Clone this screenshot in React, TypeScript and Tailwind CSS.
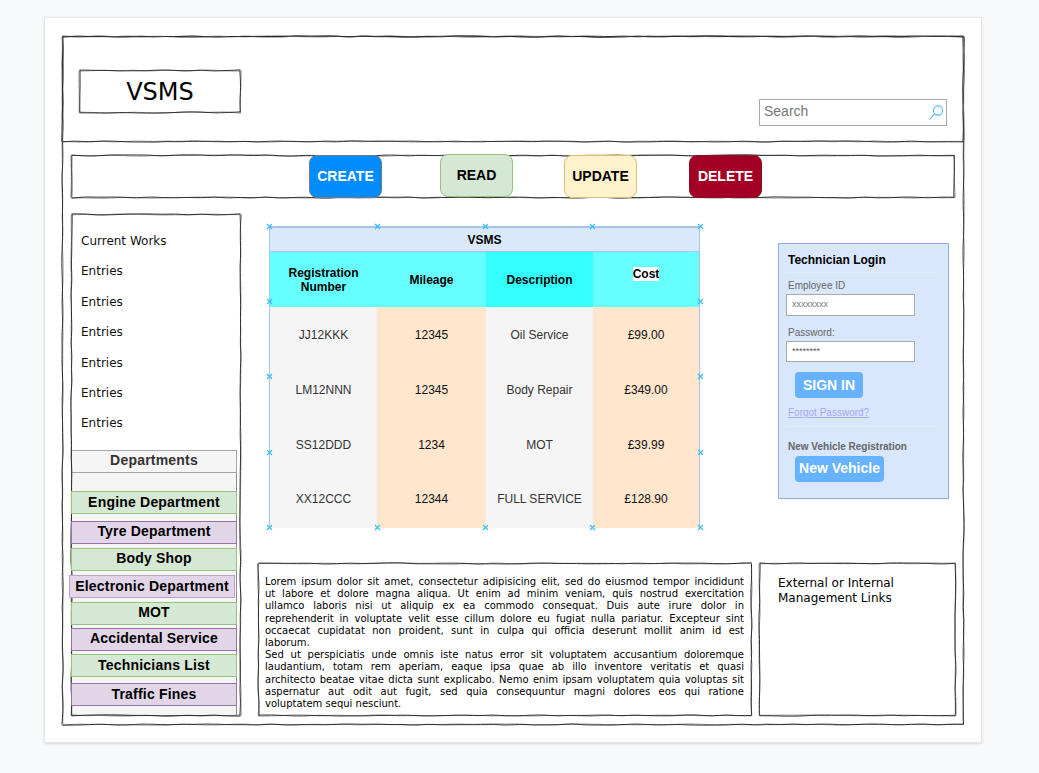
import type { ReactNode } from "react";

// hand drawn look: wobbly outline, drawn twice so it gets the dark + grey double stroke
const makeRand = (seed: number) => {
  let s = seed;
  return () => {
    s = (s * 16807) % 2147483647;
    return (s % 1000) / 1000;
  };
};

const wobbleLine = (x1: number, y1: number, x2: number, y2: number, rand: () => number) => {
  const len = Math.hypot(x2 - x1, y2 - y1);
  const steps = Math.max(2, Math.round(len / 13));
  const horizontal = y1 === y2;
  const pts: number[][] = [];
  for (let i = 0; i <= steps; i++) {
    const t = i / steps;
    const off = (rand() - 0.5) * 1.5;
    pts.push(horizontal ? [x1 + (x2 - x1) * t, y1 + off] : [x1 + off, y1 + (y2 - y1) * t]);
  }
  let d = `M${pts[0][0].toFixed(1)} ${pts[0][1].toFixed(1)}`;
  for (let i = 1; i < pts.length - 1; i++) {
    const mx = (pts[i][0] + pts[i + 1][0]) / 2;
    const my = (pts[i][1] + pts[i + 1][1]) / 2;
    d += ` Q${pts[i][0].toFixed(1)} ${pts[i][1].toFixed(1)} ${mx.toFixed(1)} ${my.toFixed(1)}`;
  }
  const last = pts[pts.length - 1];
  return `${d} L${last[0].toFixed(1)} ${last[1].toFixed(1)}`;
};

const wobbleBox = (w: number, h: number, seed: number) => {
  const rand = makeRand(seed);
  return [
    wobbleLine(0, 0, w, 0, rand),
    wobbleLine(w, 0, w, h, rand),
    wobbleLine(w, h, 0, h, rand),
    wobbleLine(0, h, 0, 0, rand),
  ].join(" ");
};

const SketchOutline = ({ w, h, seed }: { w: number; h: number; seed: number }) => (
  <svg className="absolute left-0 top-0 overflow-visible pointer-events-none" width={w} height={h} fill="none">
    <g transform="translate(0.5 0.5)">
      <path d={wobbleBox(w - 1, h - 1, seed)} stroke="#8f8f8f" strokeWidth="1" />
      <path d={wobbleBox(w - 1, h - 1, seed + 97)} stroke="#111" strokeWidth="0.8" />
    </g>
  </svg>
);

const Handle = ({ className }: { className: string }) => (
  <svg className={`absolute ${className}`} width="7" height="7" viewBox="0 0 7 7" stroke="#35bdf5" strokeWidth="1.1">
    <path d="M1 1L6 6M6 1L1 6" />
  </svg>
);

const crudButtons = [
  { label: "CREATE", className: "bg-[#008cff] border-[#6c7a89] text-white mr-[58px]" },
  { label: "READ", className: "bg-[#d5e8d4] border-[#97c27f] text-black mr-[51px] -mt-[1px]" },
  { label: "UPDATE", className: "bg-[#fff2cc] border-[#dcc06c] text-black mr-[52px]" },
  { label: "DELETE", className: "bg-[#a20025] border-[#8a1020] text-white" },
];

const departments = [
  { label: "Engine Department", className: "mt-[18px] pb-[1px] bg-[#d5e8d4] border-[#97c27f]" },
  { label: "Tyre Department", className: "mt-[7px] pb-[3px] bg-[#e1d5e7] border-[#9673a6]" },
  { label: "Body Shop", className: "mt-[4px] pb-[3px] bg-[#d5e8d4] border-[#97c27f]" },
  { label: "Electronic Department", className: "mt-[4px] -ml-[2px] pb-[1px] bg-[#e1d5e7] border-[#b9a3c4]" },
  { label: "MOT", className: "mt-[4px] pb-[3px] bg-[#d5e8d4] border-[#97c27f]" },
  { label: "Accidental Service", className: "mt-[3px] pb-[3px] bg-[#e1d5e7] border-[#9673a6]" },
  { label: "Technicians List", className: "mt-[3px] pb-[1px] bg-[#d5e8d4] border-[#97c27f]" },
  { label: "Traffic Fines", className: "mt-[6px] pb-[1px] bg-[#e1d5e7] border-[#9673a6]" },
];

const rows = [
  ["JJ12KKK", "12345", "Oil Service", "£99.00"],
  ["LM12NNN", "12345", "Body Repair", "£349.00"],
  ["SS12DDD", "1234", "MOT", "£39.99"],
  ["XX12CCC", "12344", "FULL SERVICE", "£128.90"],
];

const loremLines = [
  "Lorem ipsum dolor sit amet, consectetur adipisicing elit, sed do eiusmod tempor incididunt",
  "ut labore et dolore magna aliqua. Ut enim ad minim veniam, quis nostrud exercitation",
  "ullamco laboris nisi ut aliquip ex ea commodo consequat. Duis aute irure dolor in",
  "reprehenderit in voluptate velit esse cillum dolore eu fugiat nulla pariatur. Excepteur sint",
  "occaecat cupidatat non proident, sunt in culpa qui officia deserunt mollit anim id est",
];

const sedLines = [
  "Sed ut perspiciatis unde omnis iste natus error sit voluptatem accusantium doloremque",
  "laudantium, totam rem aperiam, eaque ipsa quae ab illo inventore veritatis et quasi",
  "architecto beatae vitae dicta sunt explicabo. Nemo enim ipsam voluptatem quia voluptas sit",
  "aspernatur aut odit aut fugit, sed quia consequuntur magni dolores eos qui ratione",
];

const Cell = ({ children, className }: { children: ReactNode; className: string }) => (
  <div className={`flex items-center justify-center text-center ${className}`}>{children}</div>
);

const VehicleTable = () => (
  <div className="relative w-[431px] h-[302px] font-['Liberation_Sans',sans-serif] text-[12px] text-[#333]">
    <div className="h-[26px] flex items-center justify-center bg-[#dae8fc] border-t-2 border-x border-b border-[#a9c4e8] font-bold text-black">
      VSMS
    </div>
    <div className="grid grid-cols-[107px_109px_107px_106px] h-[55px] font-bold text-black leading-[14px] border-x border-[#a9c4e8]">
      <Cell className="bg-[#66ffff]">Registration<br />Number</Cell>
      <Cell className="bg-[#66ffff]">Mileage</Cell>
      <Cell className="bg-[#33ffff]">Description</Cell>
      <Cell className="bg-[#66ffff] pb-[11px]"><span className="bg-white">Cost</span></Cell>
    </div>
    <div className="border-x border-[#a9c4e8] h-[221px] grid grid-rows-[55px_55px_55px_56px]">
      {rows.map((row, i) => {
        const shift = i === 3 ? "pb-[2px]" : "";
        return (
          <div key={row[0]} className="grid grid-cols-[107px_109px_107px_106px]">
            <Cell className={`bg-[#f5f5f5] ${shift}`}>{row[0]}</Cell>
            <Cell className={`bg-[#ffe6cc] text-[#111] ${shift}`}>{row[1]}</Cell>
            <Cell className={`bg-[#f5f5f5] ${shift}`}>{row[2]}</Cell>
            <Cell className={`bg-[#ffe6cc] text-[#111] ${shift}`}>{row[3]}</Cell>
          </div>
        );
      })}
    </div>
    <Handle className="left-[-3px] top-[-3px]" />
    <Handle className="left-[105px] top-[-3px]" />
    <Handle className="left-[213px] top-[-3px]" />
    <Handle className="left-[320px] top-[-3px]" />
    <Handle className="left-[428px] top-[-3px]" />
    <Handle className="left-[-3px] top-[72px]" />
    <Handle className="left-[428px] top-[72px]" />
    <Handle className="left-[-3px] top-[147px]" />
    <Handle className="left-[428px] top-[147px]" />
    <Handle className="left-[-3px] top-[223px]" />
    <Handle className="left-[428px] top-[223px]" />
    <Handle className="left-[-3px] top-[298px]" />
    <Handle className="left-[105px] top-[298px]" />
    <Handle className="left-[213px] top-[298px]" />
    <Handle className="left-[320px] top-[298px]" />
    <Handle className="left-[428px] top-[298px]" />
  </div>
);

const LoginPanel = () => (
  <div className="w-[171px] h-[256px] bg-[#d8e7fb] border border-[#8fb0dc] pl-[7px] pr-[9px] font-['Liberation_Sans',sans-serif]">
    <div className="pl-[2px] pt-[9px] h-[29px] text-[12px] leading-[14px] font-bold text-black border-b border-[#e0ecfc]">
      Technician Login
    </div>
    <div className="pl-[2px] mt-[7px] text-[10px] leading-[12px] text-[#666]">Employee ID</div>
    <div className="mt-[2px] w-[129px] h-[22px] bg-white border border-[#aaa] pl-[5px] flex items-center text-[9px] text-[#777]">
      xxxxxxxx
    </div>
    <div className="pl-[2px] mt-[11px] text-[10px] leading-[12px] text-[#666]">Password:</div>
    <div className="mt-[2px] w-[129px] h-[21px] bg-white border border-[#aaa] pl-[5px] flex items-center text-[9px] text-[#555]">
      ********
    </div>
    <div className="ml-[9px] mt-[10px] w-[68px] h-[26px] rounded-[4px] bg-[#66b2ff] flex items-center justify-center text-[14px] font-bold text-white">
      SIGN IN
    </div>
    <div className="pl-[2px] mt-[9px] text-[10px] leading-[12px] text-[#a6a6f5] underline">Forgot Password?</div>
    <div className="mt-[7px] border-t border-[#e0ecfc]" />
    <div className="pl-[2px] mt-[14px] text-[10px] leading-[12px] font-bold text-[#666]">New Vehicle Registration</div>
    <div className="ml-[9px] mt-[3px] w-[89px] h-[26px] rounded-[4px] bg-[#66b2ff] flex items-center justify-center pb-[1px] text-[14px] font-bold text-white">
      New Vehicle
    </div>
  </div>
);

const App = () => {
  return (
    <div className="h-[773px] overflow-hidden bg-[#f8f9fb] pt-[17px] pl-[44px] font-['DejaVu_Sans',sans-serif] text-[#111]">
      <div className="w-[938px] h-[726px] bg-white border border-[#e4e6e8] shadow-sm pt-[18px] pl-[17px]">
        <div className="relative w-[902px] h-[689px]">
          <SketchOutline w={902} h={689} seed={11} />

          {/* header */}
          <div className="relative w-[902px] h-[106px] flex justify-between pl-[17px] pr-[17px]">
            <SketchOutline w={902} h={106} seed={23} />
            <div className="relative w-[162px] h-[43px] mt-[34px] flex items-center justify-center text-[24px] text-black">
              <SketchOutline w={162} h={43} seed={37} />
              VSMS
            </div>
            <div className="w-[188px] h-[27px] mt-[63px] border border-[#aaa] bg-white flex items-center justify-between pl-[4px] pr-[2px] pb-[2px] font-['Liberation_Sans',sans-serif] text-[14px] text-[#777]">
              Search
              <svg className="mt-[2px]" width="16" height="17" viewBox="0 0 16 17" fill="none" stroke="#5ab0f5" strokeWidth="1.1">
                <circle cx="10" cy="6.5" r="4.6" />
                <path d="M6.6 9.8L1.5 15.5" />
              </svg>
            </div>
          </div>

          {/* crud toolbar */}
          <div className="relative ml-[9px] mt-[13px] w-[884px] h-[43px] flex items-start pl-[238px]">
            <SketchOutline w={884} h={43} seed={41} />
            {crudButtons.map((b) => (
              <div
                key={b.label}
                className={`relative w-[73px] h-[43px] rounded-[8px] border flex items-center justify-center font-['Liberation_Sans',sans-serif] text-[14px] font-bold ${b.className}`}
              >
                {b.label}
              </div>
            ))}
          </div>

          {/* main */}
          <div className="ml-[9px] mt-[16px] flex">
            <div className="relative w-[170px] h-[502px] shrink-0">
              <SketchOutline w={170} h={502} seed={53} />
              <div className="pl-[10px] pt-[19px] h-[236px] text-[12px] leading-[16px] flex flex-col gap-[14.4px]">
                <div>Current Works</div>
                {[1, 2, 3, 4, 5, 6].map((n) => (
                  <div key={n}>Entries</div>
                ))}
              </div>
              <div className="w-[166px] h-[266px] bg-[#f5f5f5] border-x border-b border-[#8f8f8f] font-['Liberation_Sans',sans-serif] font-bold text-[14px] tracking-[0.2px] text-black">
                <div className="-mx-px h-[23px] pb-[2px] border border-[#a5a5a5] flex items-center justify-center text-[#333]">
                  Departments
                </div>
                <div className="-mx-px">
                  {departments.map((d) => (
                    <div key={d.label} className={`relative w-[166px] h-[23px] border flex items-center justify-center ${d.className}`}>
                      {d.label}
                    </div>
                  ))}
                </div>
              </div>
            </div>

            <div className="flex flex-col">
              <div className="flex h-[349px] items-start">
                <div className="ml-[28px] mt-[12px]">
                  <VehicleTable />
                </div>
                <div className="ml-[78px] mt-[29px]">
                  <LoginPanel />
                </div>
              </div>
              <div className="flex ml-[17px]">
                <div className="relative w-[494px] h-[153px] pl-[7px] pr-[8px] pt-[13px] text-[10px] leading-[12.2px] text-black">
                  <SketchOutline w={494} h={153} seed={67} />
                  {loremLines.map((line) => (
                    <div key={line} className="text-justify [text-align-last:justify] whitespace-nowrap">{line}</div>
                  ))}
                  <div>laborum.</div>
                  {sedLines.map((line) => (
                    <div key={line} className="text-justify [text-align-last:justify] whitespace-nowrap">{line}</div>
                  ))}
                  <div>voluptatem sequi nesciunt.</div>
                </div>
                <div className="relative ml-[7px] w-[197px] h-[153px] pl-[19px] pt-[13px] text-[12px] leading-[15px] text-black">
                  <SketchOutline w={197} h={153} seed={79} />
                  External or Internal
                  <br />
                  Management Links
                </div>
              </div>
            </div>
          </div>
        </div>
      </div>
    </div>
  );
};

export default App;
